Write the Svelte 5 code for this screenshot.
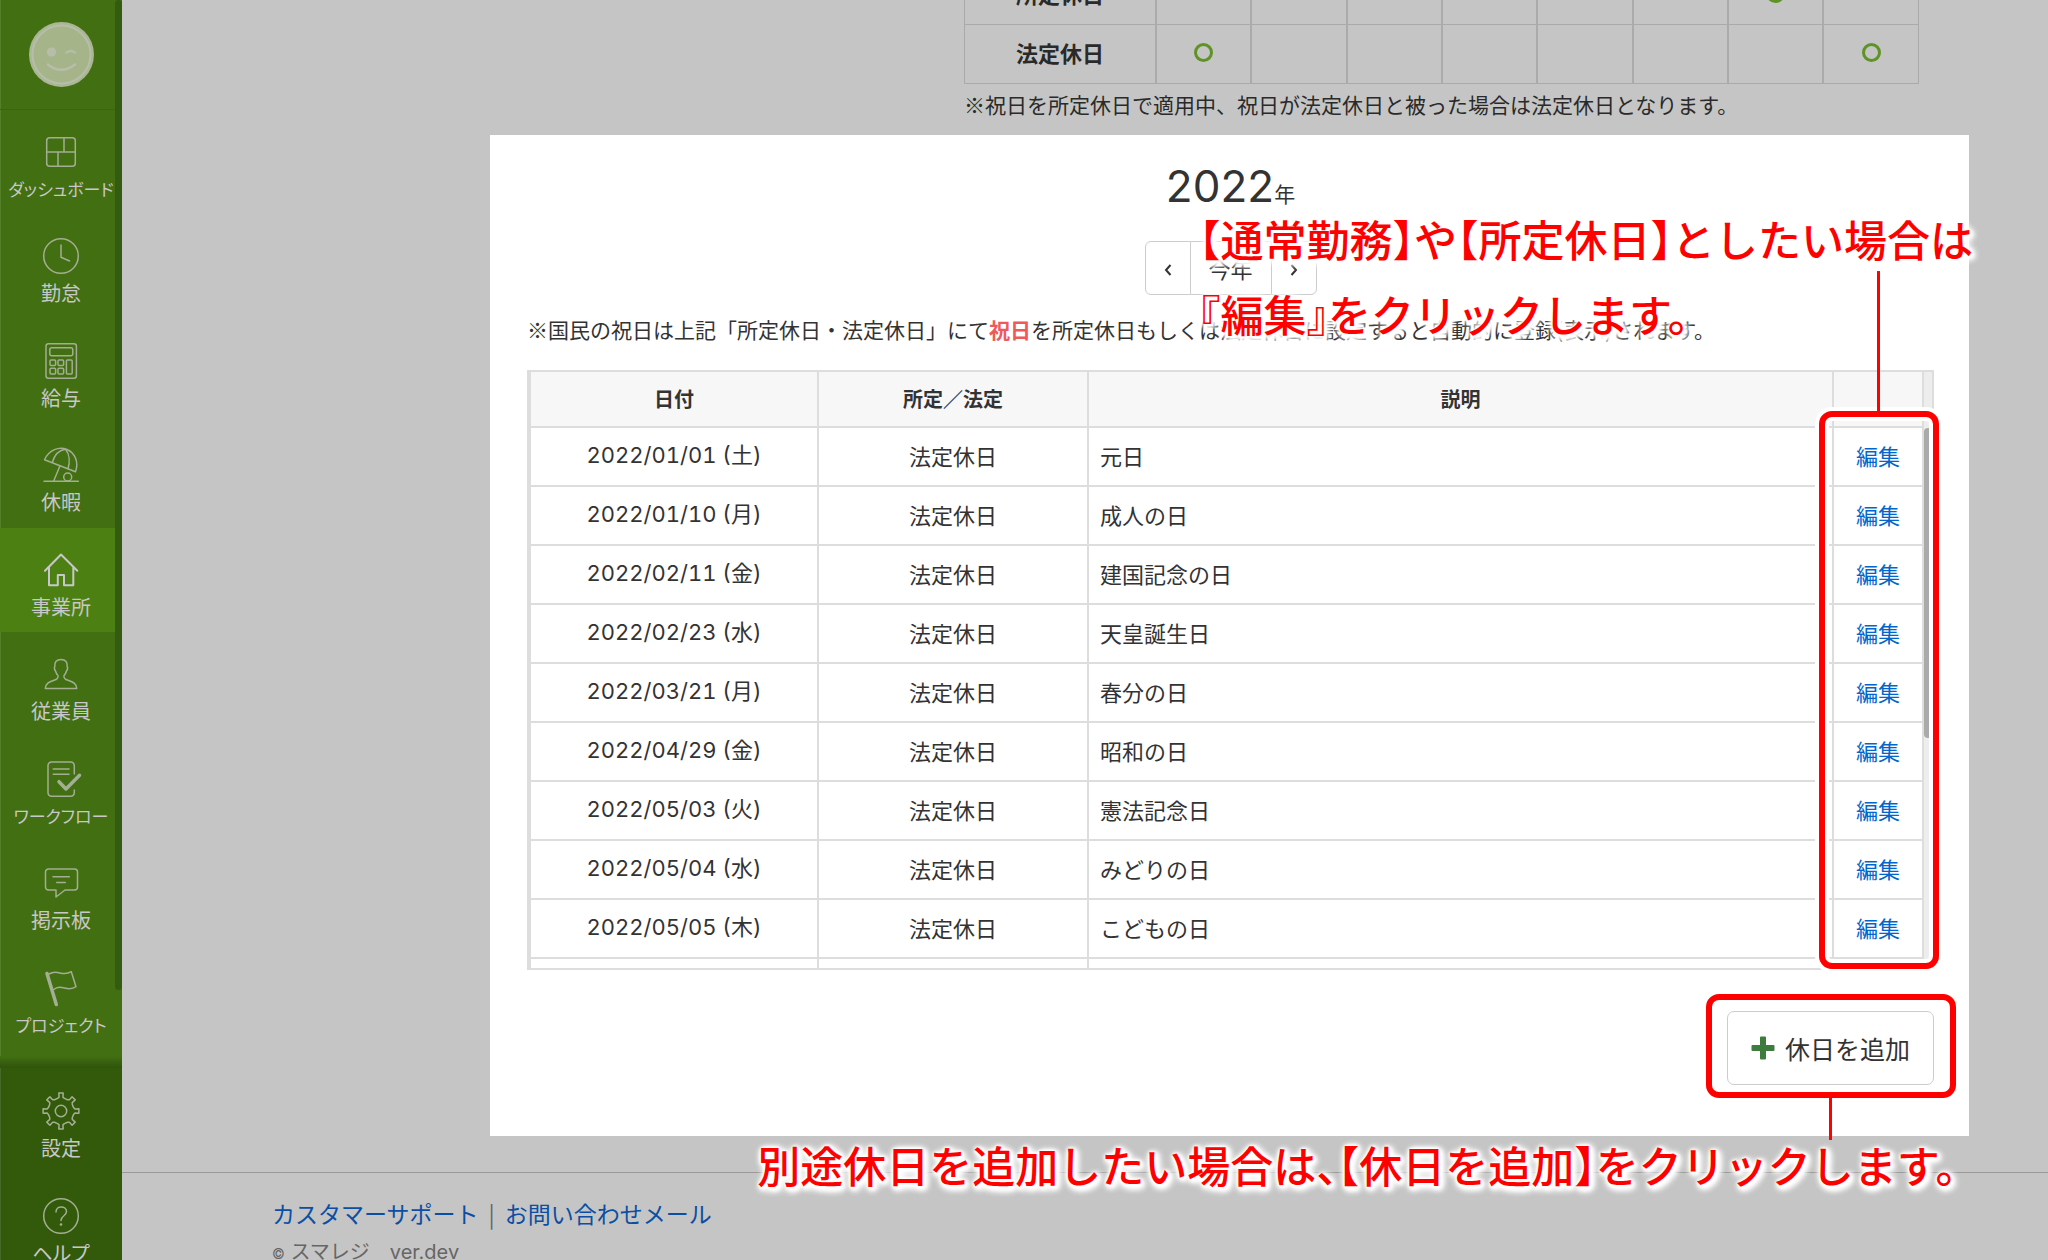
<script>
    const menu = [
        { icon: 'dashboard', label: 'ダッシュボード', long: true },
        { icon: 'clock', label: '勤怠' },
        { icon: 'calc', label: '給与' },
        { icon: 'umbrella', label: '休暇' },
        { icon: 'home', label: '事業所', active: true },
        { icon: 'user', label: '従業員' },
        { icon: 'workflow', label: 'ワークフロー', long: true },
        { icon: 'board', label: '掲示板' },
        { icon: 'flag', label: 'プロジェクト', long: true }
    ];
    const subMenu = [
        { icon: 'gear', label: '設定' },
        { icon: 'help', label: 'ヘルプ' }
    ];

    // columns of the weekly table that carry a circle
    const weekly = [
        { label: '所定休日', marks: [6] },
        { label: '法定休日', marks: [0, 7] }
    ];
    const days = [0, 1, 2, 3, 4, 5, 6, 7];

    const holidays = [
        { date: '2022/01/01 (土)', name: '元日' },
        { date: '2022/01/10 (月)', name: '成人の日' },
        { date: '2022/02/11 (金)', name: '建国記念の日' },
        { date: '2022/02/23 (水)', name: '天皇誕生日' },
        { date: '2022/03/21 (月)', name: '春分の日' },
        { date: '2022/04/29 (金)', name: '昭和の日' },
        { date: '2022/05/03 (火)', name: '憲法記念日' },
        { date: '2022/05/04 (水)', name: 'みどりの日' },
        { date: '2022/05/05 (木)', name: 'こどもの日' }
    ];

    // eight teeth round the centre of a 40x40 box
    function gearPath() {
        const pts = [];
        for (let i = 0; i < 8; i++) {
            const teeth = [[-15, 13], [-8, 14], [-7, 18], [7, 18], [8, 14], [15, 13]];
            for (const [deg, r] of teeth) {
                const a = ((i * 45 + deg - 90) * Math.PI) / 180;
                pts.push(`${(20 + r * Math.cos(a)).toFixed(1)} ${(20 + r * Math.sin(a)).toFixed(1)}`);
            }
        }
        return 'M' + pts.join('L') + 'Z';
    }
</script>

{#snippet icon(name)}
    <svg class="icon" viewBox="0 0 40 40" aria-hidden="true">
        {#if name === 'dashboard'}
            <rect x="5.7" y="5.7" width="28.6" height="28.6" rx="3" />
            <path d="M6 20H34M23 6V20M17 20V34" />
        {:else if name === 'clock'}
            <circle cx="20" cy="20" r="17.3" />
            <path d="M20 9V21.3L28.5 25" />
        {:else if name === 'calc'}
            <rect x="5" y="2.7" width="30.4" height="34.6" rx="2.5" />
            <rect x="8.8" y="6.7" width="23" height="8" rx="2" />
            <rect x="9" y="19" width="5.6" height="5.6" rx="1" />
            <rect x="17" y="19" width="5.6" height="5.6" rx="1" />
            <rect x="9" y="27.3" width="5.6" height="5.6" rx="1" />
            <rect x="17" y="27.3" width="5.6" height="5.6" rx="1" />
            <rect x="25.4" y="19" width="5.8" height="13.9" rx="1" />
        {:else if name === 'umbrella'}
            <path d="M3.5 14.7C8 5 18 1 26 4.5S38 17 34.5 26.7Z" />
            <path d="M24.5 4.2C18 5 13.5 10 11.3 17.3M24.5 4.2C28.5 9 29 17 27 23.7M19 20.7L12.7 36M3 36.3H37.3" />
            <circle cx="26.7" cy="32" r="4" />
        {:else if name === 'home'}
            <path d="M4 20.7L20 4.5L36.3 20.7M8 17.5V35.3H16.8V25H23V35.3H32.3V17.5" />
        {:else if name === 'user'}
            <path d="M20 5.5C15.5 5.5 13.5 8 13.8 12.5C13 13.5 13.5 16 14.5 17C15 19 16 20.5 17 21.5C17.5 24.5 16 25.3 13 26.3C8 28 4.5 29.5 4.3 34.6H35.8C35.5 29.5 32 28 27 26.3C24 25.3 22.5 24.5 23 21.5C24 20.5 25 19 25.5 17C26.5 16 27 13.5 26.2 12.5C26.5 8 24.5 5.5 20 5.5Z" />
        {:else if name === 'workflow'}
            <path d="M33.3 15V6.5A3.5 3.5 0 0 0 29.8 3H10.5A3.5 3.5 0 0 0 7 6.5V33.8A3.5 3.5 0 0 0 10.5 37.3H29.8A3.5 3.5 0 0 0 33.3 33.8V31M12.3 10H28M12.3 15.3H28" />
            <path class="thick" d="M18 22.7L25 30L38.5 16.3" />
        {:else if name === 'board'}
            <path d="M7.5 6H33.5A3 3 0 0 1 36.5 9V24A3 3 0 0 1 33.5 27H24L15 34V27H7.5A3 3 0 0 1 4.5 24V9A3 3 0 0 1 7.5 6ZM12 13.7H28.3M15.7 19.5H24.3" />
        {:else if name === 'flag'}
            <path d="M8 6C17 .5 21 9.5 30.3 3.7L35 18.7C26 25 21 15 12.7 21.5" />
            <path class="thick" d="M6 5.5L15.3 36.5" />
        {:else if name === 'gear'}
            <path d={gearPath()} />
            <circle cx="20" cy="20" r="5.7" />
        {:else if name === 'help'}
            <circle cx="20" cy="20" r="17.3" />
            <path d="M15 16C15 9 25.5 9.5 25.5 15.5C25.5 20 20 19.5 20 24.5" />
            <circle class="dot" cx="20" cy="28.5" r="1.3" />
        {/if}
    </svg>
{/snippet}

<div class="app">
    <aside class="sidebar">
        <div class="menu">
            <div class="profile">
                <svg class="avatar" viewBox="0 0 65 65" role="img" aria-label="ユーザー">
                    <circle cx="32.5" cy="32.5" r="32.5" fill="#abb694" />
                    <circle cx="32.5" cy="32.5" r="29" fill="#a6b48a" stroke="#b6beaa" stroke-width="2" />
                    <circle cx="22.5" cy="30" r="4.6" fill="#b6beaa" />
                    <path d="M37.5 30.5Q42 27.5 46 30.5M19 42.5Q32 53 46 42.5" fill="none" stroke="#b6beaa" stroke-width="2.5" stroke-linecap="round" />
                </svg>
            </div>
            {#each menu as item}
                <a class="item" class:active={item.active} href="#top">
                    {@render icon(item.icon)}
                    <span class:long={item.long}>{item.label}</span>
                </a>
            {/each}
            <div class="side-thumb"></div>
        </div>
        <div class="sub-menu">
            {#each subMenu as item}
                <a class="item" href="#top">
                    {@render icon(item.icon)}
                    <span>{item.label}</span>
                </a>
            {/each}
        </div>
    </aside>

    <main class="content">
        <section class="weekly">
            <table>
                <tbody>
                    {#each weekly as row}
                        <tr>
                            <th>{row.label}</th>
                            {#each days as day}
                                <td>{#if row.marks.includes(day)}<i class="circle"></i>{/if}</td>
                            {/each}
                        </tr>
                    {/each}
                </tbody>
            </table>
            <p>※祝日を所定休日で適用中、祝日が法定休日と被った場合は法定休日となります。</p>
        </section>

        <section class="panel">
            <h2>2022<small>年</small></h2>
            <div class="switcher">
                <button aria-label="前年"><svg viewBox="0 0 12 16"><path d="M8.5 3L4 8L8.5 13" /></svg></button>
                <button>今年</button>
                <button aria-label="翌年"><svg viewBox="0 0 12 16"><path d="M3.5 3L8 8L3.5 13" /></svg></button>
            </div>
            <p class="note">※国民の祝日は上記「所定休日・法定休日」にて<strong>祝日</strong>を所定休日もしくは法定休日に設定すると自動的に登録(表示)されます。</p>

            <div class="list">
                <div class="scroller">
                    <table>
                        <thead>
                            <tr>
                                <th class="date">日付</th>
                                <th class="kind">所定／法定</th>
                                <th>説明</th>
                                <th class="edit"></th>
                            </tr>
                        </thead>
                        <tbody>
                            {#each holidays as holiday}
                                <tr>
                                    <td class="date">{holiday.date}</td>
                                    <td>法定休日</td>
                                    <td class="name">{holiday.name}</td>
                                    <td><a href="#top">編集</a></td>
                                </tr>
                            {/each}
                            <tr><td></td><td></td><td></td><td></td></tr>
                        </tbody>
                    </table>
                    <div class="track"><div class="thumb"></div></div>
                </div>
                <div class="frame frame-edit"></div>
            </div>

            <div class="actions">
                <div class="add-wrap">
                    <button class="add">
                        <svg viewBox="0 0 24 24"><path d="M9 1.5Q9 .5 10 .5H14Q15 .5 15 1.5V9H22.5Q23.5 9 23.5 10V14Q23.5 15 22.5 15H15V22.5Q15 23.5 14 23.5H10Q9 23.5 9 22.5V15H1.5Q.5 15 .5 14V10Q.5 9 1.5 9H9Z" /></svg>
                        休日を追加
                    </button>
                    <div class="frame frame-add"></div>
                </div>
            </div>

            <div class="callout callout-edit">【通常勤務】や【所定休日】としたい場合は<br />『編集』をクリックします。</div>
            <div class="callout callout-add">別途休日を追加したい場合は、【休日を追加】をクリックします。</div>
        </section>

        <footer>
            <div class="links"><a href="#top">カスタマーサポート</a><span>|</span><a href="#top">お問い合わせメール</a></div>
            <div class="copy"><small>©</small> スマレジ　ver.dev</div>
        </footer>
    </main>
</div>

<style>
    :global(body) {
        background: #c5c5c5;
    }
    .app {
        display: flex;
        height: 100vh;
        overflow: hidden;
        font-family: "Noto Sans CJK JP", sans-serif;
        font-size: 22px;
        line-height: 32px;
        color: #333;
    }
    h2, .copy, td.date {
        font-family: Inter, "Noto Sans CJK JP", sans-serif;
    }
    p, h2 {
        margin: 0;
    }
    button {
        font: inherit;
        color: inherit;
        background: #fff;
        border: 1px solid #ccc;
    }
    a {
        color: #06c;
        text-decoration: none;
    }

    /* sidebar */
    .sidebar {
        display: flex;
        flex-direction: column;
        flex: none;
        width: 122px;
        background: #426f12;
        box-shadow: inset 1px 0 #55802a;
    }
    .menu {
        position: relative;
        flex: 1;
        display: flex;
        flex-direction: column;
        padding-bottom: 18px;
        background: linear-gradient(to top, #2f530c, #426f12 12px, transparent 12px);
    }
    .profile {
        display: flex;
        align-items: center;
        justify-content: center;
        height: 109px;
        border-bottom: 1px solid #3c6511;
    }
    .avatar {
        width: 65px;
        height: 65px;
    }
    .item {
        flex: 1;
        display: flex;
        flex-direction: column;
        align-items: center;
        box-sizing: border-box;
        padding-top: 22px;
        font-size: 20px;
        line-height: 28px;
        color: #c8c8c8;
        font-feature-settings: "palt";
        white-space: nowrap;
    }
    .item span {
        margin-top: 3px;
    }
    .item .long {
        font-size: 17px;
    }
    .active {
        background: #4c8012;
    }
    .icon {
        flex: none;
        width: 40px;
        height: 40px;
        fill: none;
        stroke: #a3ae92;
        stroke-width: 1.5;
        stroke-linejoin: round;
        stroke-linecap: round;
        overflow: visible;
    }
    .active .icon {
        stroke: #c8c8c8;
        stroke-width: 2;
    }
    .thick {
        stroke-width: 3.5;
    }
    .dot {
        fill: #a3ae92;
        stroke: none;
    }
    .side-thumb {
        position: absolute;
        top: 0;
        right: 0;
        width: 7px;
        height: 990px;
        border-radius: 4px;
        background: #345c10;
    }
    .sub-menu {
        flex: none;
        box-sizing: border-box;
        height: 192px;
        padding-top: 1px;
        background: #325a0a;
        box-shadow: inset 1px 0 #46692a;
    }
    .sub-menu .item {
        height: 105px;
    }

    /* page, scrolled a little into the weekly table */
    .content {
        flex: 1;
        min-width: 0;
        margin-top: -35px;
    }
    .weekly {
        margin: 0 129px 0 842px;
        color: #2a2a2a;
    }
    .weekly table {
        width: 100%;
        table-layout: fixed;
        border-collapse: collapse;
        border: 1px solid #aaa;
    }
    .weekly th {
        width: 190px;
    }
    .weekly th, .weekly td {
        height: 54px;
        padding: 0 0 4px;
        border-bottom: 1px solid #aaa;
        text-align: center;
    }
    .weekly td {
        border-left: 2px solid #ababab;
    }
    .circle {
        display: block;
        box-sizing: border-box;
        width: 19px;
        height: 19px;
        margin: 0 auto;
        border: 3px solid #5f9326;
        border-radius: 50%;
    }
    .weekly p {
        margin: 4px 0 15px;
        font-size: 21px;
        white-space: nowrap;
    }

    .panel {
        position: relative;
        margin: 0 79px 0 368px;
        padding: 23px 35px 51px 37px;
        background: #fff;
    }
    h2 {
        height: 56px;
        font-size: 44px;
        font-weight: 400;
        line-height: 56px;
        text-align: center;
    }
    h2 small {
        font-size: 21px;
    }
    .switcher {
        display: flex;
        justify-content: center;
        margin: 27px 0 18px;
    }
    .switcher button {
        width: 46px;
        height: 54px;
        padding: 0;
    }
    .switcher button:first-child {
        border-radius: 6px 0 0 6px;
    }
    .switcher button:nth-child(2) {
        width: 80px;
        border-width: 1px 0;
    }
    .switcher button:last-child {
        border-radius: 0 6px 6px 0;
    }
    .switcher svg {
        width: 12px;
        height: 16px;
        fill: none;
        stroke: #333;
        stroke-width: 2;
    }
    .note {
        font-size: 21px;
        white-space: nowrap;
    }
    .note strong {
        color: #ee5a5a;
    }

    .list {
        position: relative;
        margin-top: 25px;
    }
    .scroller {
        display: flex;
        height: 596px;
        overflow: hidden;
        border: 2px solid #ddd;
    }
    .list table {
        flex: 1;
        align-self: flex-start;
        table-layout: fixed;
        border-spacing: 0;
    }
    .list th {
        height: 54px;
        padding: 0;
        font-size: 20px;
        background: #f7f7f7;
    }
    .list th, .list td {
        border: solid #ddd;
        border-width: 0 2px 2px 0;
    }
    .list tr > :first-child {
        border-left-width: 2px;
    }
    .list td {
        height: 53px;
        padding: 0 0 4px;
        text-align: center;
    }
    th.date {
        width: 286px;
    }
    th.kind {
        width: 268px;
    }
    th.edit {
        width: 88px;
    }
    td.date {
        font-feature-settings: "tnum";
    }
    .list td.name {
        padding-left: 11px;
        text-align: left;
    }
    .track {
        flex: none;
        width: 8px;
        padding-top: 56px;
        background: #ededed;
    }
    .thumb {
        height: 310px;
        border-radius: 4px;
        background: #aaa;
    }

    .actions {
        display: flex;
        justify-content: flex-end;
        margin-top: 41px;
    }
    .add-wrap {
        position: relative;
    }
    .add {
        display: flex;
        align-items: center;
        gap: 10px;
        height: 74px;
        padding: 0 23px;
        border-radius: 7px;
        font-size: 25px;
    }
    .add svg {
        width: 24px;
        height: 24px;
        fill: #3e7b3e;
    }

    /* red callouts lying over the page */
    .frame {
        position: absolute;
        box-sizing: border-box;
        border: 6px solid #f00;
        border-radius: 13px;
        box-shadow: 0 0 0 4px #fff, inset 0 0 0 4px #fff;
        pointer-events: none;
    }
    .frame::after {
        content: "";
        position: absolute;
        left: 50%;
        width: 3px;
        margin-left: -2px;
        background: #f00;
    }
    .frame-edit {
        top: 41px;
        right: -5px;
        bottom: 1px;
        width: 120px;
    }
    .frame-edit::after {
        bottom: 100%;
        height: 146px;
    }
    .frame-add {
        inset: -17px -22px -13px -21px;
    }
    .frame-add::after {
        top: 100%;
        height: 48px;
    }
    .callout {
        position: absolute;
        font-size: 43px;
        font-weight: 500;
        line-height: 75px;
        color: #f00;
        white-space: nowrap;
        font-feature-settings: "halt";
        text-shadow: 0 0 3px #fff, 0 0 4px #fff, 1px 1px 4px #fff, 2px 2px 4px #fff, 2px 2px 5px #fff, 2px 2px 6px #fff, 2px 2px 6px #fff, 2px 2px 8px #fff, 2px 2px 8px #fff, 2px 2px 10px #fff, 2px 2px 10px #fff;
    }
    .callout-edit {
        top: 66px;
        right: -4px;
    }
    .callout-add {
        right: 12px;
        bottom: -66px;
    }

    footer {
        margin-top: 36px;
        padding: 23px 0 0 150px;
        border-top: 1px solid #999;
        color: #666;
    }
    .links {
        font-size: 23px;
        line-height: 34px;
    }
    .links a {
        color: #0a4fa3;
    }
    .links span {
        margin: 0 10px;
    }
    .copy {
        margin-top: 8px;
        font-size: 20px;
        line-height: 28px;
    }
    .copy small {
        font-size: 14px;
    }
</style>
